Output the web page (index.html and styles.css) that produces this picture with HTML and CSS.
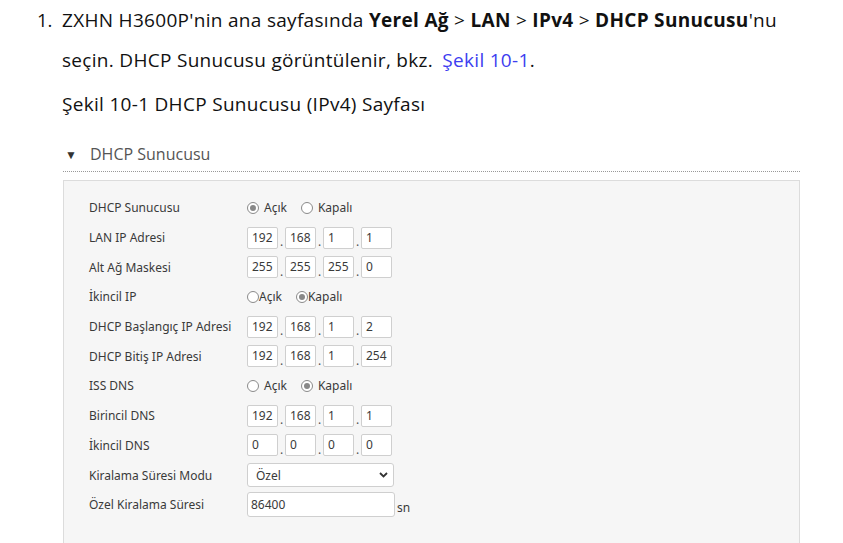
FILE: index.html
```html
<!DOCTYPE html>
<html lang="tr">
<head>
    <meta charset="UTF-8">
    <title>DHCP Sunucusu</title>
    <link rel="stylesheet" href="styles.css">
</head>
<body>
    <div class="doc">
        <div class="step">
            <span class="num">1.</span>
            <p class="step-text">ZXHN H3600P'nin ana sayfasında <b>Yerel Ağ</b> &gt; <b>LAN</b> &gt; <b>IPv4</b> &gt; <b>DHCP Sunucusu</b>'nu<br>seçin. DHCP Sunucusu görüntülenir, bkz. <a class="ref" href="#">Şekil 10-1</a>.</p>
        </div>
        <p class="caption">Şekil 10-1 DHCP Sunucusu (IPv4) Sayfası</p>

        <div class="section">
            <div class="section-title"><span class="arrow">▼</span>DHCP Sunucusu</div>
            <div class="panel">
                <div class="row">
                    <label class="lbl">DHCP Sunucusu</label>
                    <div class="val">
                        <span class="radio on"></span><span class="opt">Açık</span>
                        <span class="radio"></span><span class="opt">Kapalı</span>
                    </div>
                </div>
                <div class="row">
                    <label class="lbl">LAN IP Adresi</label>
                    <div class="val ip">
                        <span class="box">192</span><span class="dot">.</span><span class="box">168</span><span class="dot">.</span><span class="box">1</span><span class="dot">.</span><span class="box">1</span>
                    </div>
                </div>
                <div class="row">
                    <label class="lbl">Alt Ağ Maskesi</label>
                    <div class="val ip">
                        <span class="box">255</span><span class="dot">.</span><span class="box">255</span><span class="dot">.</span><span class="box">255</span><span class="dot">.</span><span class="box">0</span>
                    </div>
                </div>
                <div class="row">
                    <label class="lbl">İkincil IP</label>
                    <div class="val tight">
                        <span class="radio"></span><span class="opt">Açık</span>
                        <span class="radio on"></span><span class="opt">Kapalı</span>
                    </div>
                </div>
                <div class="row">
                    <label class="lbl">DHCP Başlangıç IP Adresi</label>
                    <div class="val ip">
                        <span class="box">192</span><span class="dot">.</span><span class="box">168</span><span class="dot">.</span><span class="box">1</span><span class="dot">.</span><span class="box">2</span>
                    </div>
                </div>
                <div class="row">
                    <label class="lbl">DHCP Bitiş IP Adresi</label>
                    <div class="val ip">
                        <span class="box">192</span><span class="dot">.</span><span class="box">168</span><span class="dot">.</span><span class="box">1</span><span class="dot">.</span><span class="box">254</span>
                    </div>
                </div>
                <div class="row">
                    <label class="lbl">ISS DNS</label>
                    <div class="val">
                        <span class="radio"></span><span class="opt">Açık</span>
                        <span class="radio on"></span><span class="opt">Kapalı</span>
                    </div>
                </div>
                <div class="row">
                    <label class="lbl">Birincil DNS</label>
                    <div class="val ip">
                        <span class="box">192</span><span class="dot">.</span><span class="box">168</span><span class="dot">.</span><span class="box">1</span><span class="dot">.</span><span class="box">1</span>
                    </div>
                </div>
                <div class="row">
                    <label class="lbl">İkincil DNS</label>
                    <div class="val ip">
                        <span class="box">0</span><span class="dot">.</span><span class="box">0</span><span class="dot">.</span><span class="box">0</span><span class="dot">.</span><span class="box">0</span>
                    </div>
                </div>
                <div class="row">
                    <label class="lbl">Kiralama Süresi Modu</label>
                    <div class="val">
                        <div class="select">
                            <span>Özel</span>
                            <svg width="9" height="6" viewBox="0 0 9 6"><path d="M1 1 L4.5 4.5 L8 1" fill="none" stroke="#333" stroke-width="1.8"/></svg>
                        </div>
                    </div>
                </div>
                <div class="row">
                    <label class="lbl">Özel Kiralama Süresi</label>
                    <div class="val">
                        <span class="text-input">86400</span><span class="unit">sn</span>
                    </div>
                </div>
            </div>
        </div>
    </div>
</body>
</html>
```

FILE: styles.css
```css
body {
    margin: 0;
    background: #fff;
    font-family: "Open Sans", "Noto Sans", sans-serif;
    color: #111;
}

.step {
    display: flex;
    padding-left: 37px;
}

.num {
    width: 25px;
    font-size: 18.5px;
    line-height: 40px;
    flex-shrink: 0;
}

.step-text {
    margin: 0;
    font-size: 19px;
    line-height: 40px;
    letter-spacing: 0.3px;
}

.step-text b {
    font-weight: 700;
}

.ref {
    color: #3d3df0;
    text-decoration: none;
    margin-left: 4px;
}

.caption {
    margin: 4px 0 0 62px;
    font-size: 19px;
    line-height: 40px;
    letter-spacing: 0.3px;
}

.section {
    margin: 19px 0 0 63px;
    width: 737px;
}

.section-title {
    font-size: 16px;
    color: #555;
    line-height: 22px;
    padding-bottom: 5px;
    border-bottom: 1px dotted #999;
}

.arrow {
    display: inline-block;
    font-size: 12px;
    color: #333;
    width: 25px;
    padding-left: 2px;
    vertical-align: 1px;
}

.panel {
    margin-top: 8px;
    background: #f6f6f6;
    border: 1px solid #dcdcdc;
    padding: 12px 0 40px 25px;
}

.row {
    display: flex;
    align-items: center;
    height: 29.7px;
    font-family: "Noto Sans", sans-serif;
    font-size: 12px;
    color: #3a3a3a;
}

.lbl {
    width: 158px;
}

.val {
    display: flex;
    align-items: center;
}

.radio {
    width: 12px;
    height: 12px;
    border: 1px solid #8a8a8a;
    border-radius: 50%;
    background: #fff;
    box-sizing: border-box;
    display: flex;
    align-items: center;
    justify-content: center;
}

.radio.on::after {
    content: "";
    width: 6px;
    height: 6px;
    border-radius: 50%;
    background: #888;
}

.opt {
    margin: 0 14px 0 5px;
}

.tight .opt {
    margin: 0 14px 0 0;
}

.box {
    width: 31px;
    height: 22px;
    box-sizing: border-box;
    border: 1px solid #cfcfcf;
    border-radius: 2px;
    background: #fff;
    padding-left: 4px;
    line-height: 20px;
}

.dot {
    width: 7px;
    text-align: center;
    padding-top: 8px;
    color: #555;
}

.select {
    width: 147px;
    height: 24px;
    box-sizing: border-box;
    border: 1px solid #cfcfcf;
    border-radius: 3px;
    background: #fff;
    display: flex;
    align-items: center;
    justify-content: space-between;
    padding: 0 5px 0 8px;
}

.text-input {
    width: 148px;
    height: 25px;
    box-sizing: border-box;
    border: 1px solid #cfcfcf;
    border-radius: 3px;
    background: #fff;
    padding-left: 3px;
    line-height: 23px;
}

.unit {
    margin-left: 2px;
    padding-top: 6px;
}
```
